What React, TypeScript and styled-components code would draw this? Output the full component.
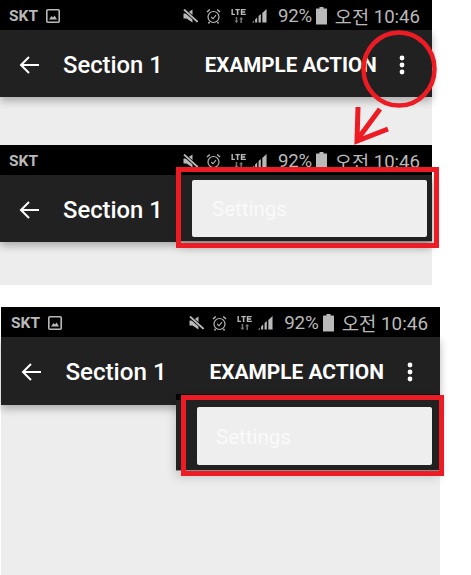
import React from "react";
import styled, { createGlobalStyle } from "styled-components";

const Global = createGlobalStyle`
  html, body { margin: 0; padding: 0; background: #fff; }
  body { font-family: Roboto, "Noto Sans CJK KR", sans-serif; width: 471px; height: 575px; overflow: hidden; }
`;

const Page = styled.div`
  position: relative;
  width: 471px;
  height: 575px;
  overflow: hidden;
`;

const Screen = styled.section<{ $w: number; $h: number; $left?: number; $top?: number }>`
  position: relative;
  width: ${(p) => p.$w}px;
  height: ${(p) => p.$h}px;
  margin-left: ${(p) => p.$left ?? 0}px;
  margin-top: ${(p) => p.$top ?? 0}px;
  background: #ededed;
`;

const StatusBar = styled.div<{ $s: number }>`
  height: 30px;
  box-sizing: border-box;
  background: #000;
  color: #b9b9b9;
  display: flex;
  align-items: center;
  padding: 1px 12px 0 ${(p) => (p.$s > 1 ? 10 : 9)}px;
  font-size: ${(p) => 18.6 * p.$s}px;
`;

const Carrier = styled.span`
  font-size: 15.5px;
  font-weight: 700;
  margin-right: 8px;
`;

const Spacer = styled.span`
  flex: 1;
`;

const Slot = styled.span<{ $gap: number }>`
  display: flex;
  margin-right: ${(p) => p.$gap}px;
`;

const Percent = styled.span`
  letter-spacing: -0.2px;
  margin-right: 4px;
`;

const Clock = styled.span`
  white-space: nowrap;
  margin: -2px 0 0 8px;
`;

const Meridiem = styled.span`
  position: relative;
  top: 1px;
`;

const AppBar = styled.header<{ $h: number; $pad: number }>`
  height: ${(p) => p.$h}px;
  background: #212121;
  color: #fff;
  display: flex;
  align-items: center;
  padding: 2px 0 0 ${(p) => p.$pad}px;
  box-sizing: border-box;
  box-shadow: 0 4px 8px rgba(0, 0, 0, 0.28);
`;

const Title = styled.span<{ $s: number }>`
  font-size: ${(p) => 23.8 * p.$s}px;
  font-weight: 500;
  margin-left: ${(p) => 24 * p.$s}px;
  white-space: nowrap;
`;

const Action = styled.span<{ $s: number }>`
  font-size: ${(p) => 20.6 * p.$s}px;
  font-weight: 700;
  margin-left: ${(p) => 42 * p.$s}px;
  white-space: nowrap;
`;

const Dots = styled.svg<{ $gap: number }>`
  margin-left: ${(p) => p.$gap}px;
  flex: none;
`;

const MenuPanel = styled.div<{ $l: number; $t: number; $w: number; $h: number; $strip: number }>`
  position: absolute;
  left: ${(p) => p.$l}px;
  top: ${(p) => p.$t}px;
  width: ${(p) => p.$w}px;
  height: ${(p) => p.$h}px;
  box-sizing: border-box;
  background: #212121;
  border-top: ${(p) => p.$strip}px solid #000;
  border-bottom: 1px solid #8c8c8c;
  box-shadow: 0 5px 10px rgba(0, 0, 0, 0.2);
  display: flex;
  align-items: flex-end;
  justify-content: flex-end;
`;

const MenuCard = styled.div<{ $r: number; $b: number; $h: number; $inset: number }>`
  width: 235px;
  height: ${(p) => p.$h}px;
  margin: 0 ${(p) => p.$r}px ${(p) => p.$b}px 0;
  background: #eeeeee;
  border-radius: 2px;
  color: #fafafa;
  font-size: 20.5px;
  display: flex;
  align-items: center;
  padding: 1px 0 0 ${(p) => p.$inset}px;
  box-sizing: border-box;
`;

const RedBox = styled.div<{ $l: number; $t: number; $w: number; $h: number }>`
  position: absolute;
  left: ${(p) => p.$l}px;
  top: ${(p) => p.$t}px;
  width: ${(p) => p.$w}px;
  height: ${(p) => p.$h}px;
  border: 5px solid #ed1c24;
  box-sizing: border-box;
`;

const Ink = styled.svg`
  position: absolute;
  left: 0;
  top: 0;
  pointer-events: none;
`;

const Gallery = () => (
  <svg width="14" height="14" viewBox="0 0 14 14" fill="none">
    <rect x="0.8" y="0.8" width="12.4" height="12.4" rx="1" stroke="#b9b9b9" strokeWidth="1.6" />
    <path d="M3 10.5 L5.5 7 L7 8.6 L8.6 6.6 L11 10.5 Z" fill="#b9b9b9" />
  </svg>
);

const Mute = () => (
  <svg width="15" height="14" viewBox="0 0 15 14">
    <path d="M0.5 4.5 H3.5 L9.5 0.5 V13.5 L3.5 9.5 H0.5 Z" fill="#b9b9b9" />
    <path d="M0.5 0.5 L14.5 12.5" stroke="#000" strokeWidth="3.4" />
    <path d="M1 0.5 L14.5 12.8" stroke="#b9b9b9" strokeWidth="1.8" />
  </svg>
);

const Alarm = () => (
  <svg width="15" height="16" viewBox="0 0 15 16" fill="none" stroke="#b9b9b9">
    <circle cx="7.5" cy="9" r="5.5" strokeWidth="1.2" />
    <path d="M5.2 9 L7 10.8 L10 7.2" strokeWidth="1.1" />
    <path d="M1 4 L3.8 1.5 M14 4 L11.2 1.5 M3.5 14 L2.5 15.5 M11.5 14 L12.5 15.5" strokeWidth="1.4" />
  </svg>
);

const Lte = () => (
  <svg width="16" height="16" viewBox="0 0 17 16" fill="#b9b9b9">
    <path d="M0.5 0.5 H2 V5.5 H4.2 V7 H0.5 Z M4.6 0.5 H9.4 V2 H7.8 V7 H6.2 V2 H4.6 Z M10.4 0.5 H15.6 V2 H12 V3 H15 V4.5 H12 V5.5 H15.8 V7 H10.4 Z" />
    <path d="M5 9 H6.6 V13 H8 L5.8 15.5 L3.6 13 H5 Z M10 15.5 H11.6 V11.5 H13 L10.8 9 L8.6 11.5 H10 Z" fill="#777" />
  </svg>
);

const Signal = () => (
  <svg width="15" height="15" viewBox="0 0 16 16" fill="#b9b9b9">
    <path d="M0 15.5 H2 V13.5 L0 15.5 Z" />
    <path d="M3.3 15.5 H5.5 V10 L3.3 12.2 Z" />
    <path d="M7 15.5 H9.4 V6.4 L7 8.6 Z" />
    <path d="M11 15.5 H15.5 V1 L11 5.2 Z" />
  </svg>
);

const Battery = () => (
  <svg width="11" height="18" viewBox="0 0 11 18" fill="#b9b9b9">
    <rect x="3.5" y="0" width="4" height="2" />
    <rect x="0" y="1.5" width="11" height="16" rx="0.6" />
  </svg>
);

const Back = () => (
  <svg width="20" height="18" viewBox="0 0 20 18" fill="none" stroke="#fff" strokeWidth="2">
    <path d="M20 9 H2 M10 1 L2 9 L10 17" />
  </svg>
);

const More = ({ gap }: { gap: number }) => (
  <Dots $gap={gap} width="6" height="20" viewBox="0 0 6 20" fill="#fff">
    <circle cx="3" cy="3" r="2.4" />
    <circle cx="3" cy="10" r="2.4" />
    <circle cx="3" cy="17" r="2.4" />
  </Dots>
);

const StatusRow = ({ thumb, s = 1 }: { thumb?: boolean; s?: number }) => (
  <StatusBar $s={s}>
    <Carrier>SKT</Carrier>
    {thumb && <Gallery />}
    <Spacer />
    <Slot $gap={8}><Mute /></Slot>
    <Slot $gap={10}><Alarm /></Slot>
    <Slot $gap={5}><Lte /></Slot>
    <Slot $gap={11}><Signal /></Slot>
    <Percent>92%</Percent>
    <Battery />
    <Clock><Meridiem>오전</Meridiem> 10:46</Clock>
  </StatusBar>
);

export default function App() {
  return (
    <Page>
      <Global />
      <Screen $w={432} $h={145}>
        <StatusRow thumb />
        <AppBar $h={67} $pad={19}>
          <Back />
          <Title $s={1}>Section 1</Title>
          <Action $s={1}>EXAMPLE ACTION</Action>
          <More gap={22} />
        </AppBar>
      </Screen>

      <Screen $w={432} $h={140}>
        <StatusRow />
        <AppBar $h={67} $pad={19}>
          <Back />
          <Title $s={1}>Section 1</Title>
        </AppBar>
        <MenuPanel $l={180} $t={30} $w={252} $h={67} $strip={0}>
          <MenuCard $r={5} $b={4} $h={57} $inset={20}>Settings</MenuCard>
        </MenuPanel>
      </Screen>

      <Screen $w={439} $h={268} $left={1} $top={22}>
        <StatusRow thumb s={1.015} />
        <AppBar $h={68} $pad={20}>
          <Back />
          <Title $s={1.016}>Section 1</Title>
          <Action $s={1.016}>EXAMPLE ACTION</Action>
          <More gap={23} />
        </AppBar>
        <MenuPanel $l={175} $t={87} $w={264} $h={77} $strip={6}>
          <MenuCard $r={8} $b={5} $h={58} $inset={19}>Settings</MenuCard>
        </MenuPanel>
      </Screen>

      <RedBox $l={176} $t={167} $w={263} $h={81} />
      <RedBox $l={181} $t={395} $w={263} $h={81} />
      <Ink width="471" height="575" viewBox="0 0 471 575" fill="none" stroke="#ed1c24">
        <ellipse cx="399" cy="69" rx="35.5" ry="36.5" strokeWidth="4.5" />
        <path d="M380 109 L357 140 M358 107 L357 141 L388 129" strokeWidth="5" />
      </Ink>
    </Page>
  );
}
